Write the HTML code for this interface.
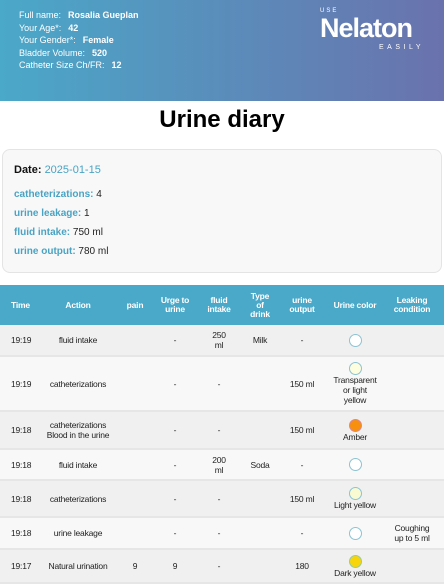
<!DOCTYPE html>
<html><head><meta charset="utf-8"><style>
*{margin:0;padding:0;box-sizing:border-box}
body{width:444px;height:583px;overflow:hidden;background:#fff;font-family:"Liberation Sans",Arial,sans-serif;color:#222}
.hdr{position:absolute;left:0;top:0;width:444px;height:101px;background:linear-gradient(90deg,#4aa8c8,#6a72ad)}
.info{position:absolute;left:19px;top:9px;color:#fff;font-size:9px;line-height:12.6px}
.info b{margin-left:7px}
.logo{position:absolute;left:320px;top:8px;color:#fff}
.logo .use{font-size:6px;letter-spacing:2px;position:absolute;left:0;top:0}
.logo .nel{font-size:27px;font-weight:bold;position:absolute;left:0;top:5px;letter-spacing:-1px}
.logo .eas{font-size:7px;letter-spacing:3.5px;position:absolute;left:59px;top:36px;width:70px}
h1{position:absolute;top:106px;width:444px;text-align:center;font-size:24px;font-weight:bold;color:#000}
.card{position:absolute;left:2px;top:149px;width:440px;height:124px;background:#f8f8f8;border:1px solid #e4e4e4;border-radius:8px;padding:12px 11px;font-size:10px}
.card .d{font-size:11px;font-weight:bold;color:#111;margin-top:2px}
.card .d span{font-weight:normal;color:#4aa3c3}
.card p{margin-top:8px;line-height:11px}
.card p.f{margin-top:13px}
.card p b{color:#4aa3c3}
table{position:absolute;left:0;top:285px;width:444px;border-collapse:collapse;table-layout:fixed;font-size:8.5px;text-align:center;letter-spacing:-0.2px}
th{background:#4aa8c8;color:#fff;font-weight:bold;height:40px;line-height:9px;padding:0 1px}
td{line-height:10px;padding:0 1px;border-bottom:2px solid #e6e6e6}
tr:nth-child(odd) td{background:#f8f8f8}
tr:nth-child(even) td{background:#f0f0f0}
td:first-child,th:first-child{text-align:left;padding-left:11px}
.c{display:inline-block;width:13px;height:13px;border-radius:50%;border:1px solid #8cc3d3;background:#fff;vertical-align:middle}
</style></head><body>
<div class="hdr">
<div class="info">Full name:<b>Rosalia Gueplan</b><br>Your Age*:<b>42</b><br>Your Gender*:<b>Female</b><br>Bladder Volume:<b>520</b><br>Catheter Size Ch/FR:<b>12</b></div>
<div class="logo"><div class="use">USE</div><div class="nel">Nelaton</div><div class="eas">EASILY</div></div>
</div>
<h1>Urine diary</h1>
<div class="card">
<div class="d">Date: <span>2025-01-15</span></div>
<p class="f"><b>catheterizations:</b> 4</p>
<p><b>urine leakage:</b> 1</p>
<p><b>fluid intake:</b> 750 ml</p>
<p><b>urine output:</b> 780 ml</p>
</div>
<table>
<colgroup><col style="width:44px"><col style="width:68px"><col style="width:46px"><col style="width:34px"><col style="width:54px"><col style="width:28px"><col style="width:56px"><col style="width:50px"><col style="width:64px"></colgroup>
<tr><th>Time</th><th>Action</th><th>pain</th><th>Urge to<br>urine</th><th>fluid<br>intake</th><th>Type<br>of<br>drink</th><th>urine<br>output</th><th>Urine color</th><th>Leaking<br>condition</th></tr>
<tr style="height:31px"><td>19:19</td><td>fluid intake</td><td></td><td>-</td><td>250<br>ml</td><td>Milk</td><td>-</td><td><span class="c"></span></td><td></td></tr>
<tr style="height:55px"><td>19:19</td><td>catheterizations</td><td></td><td>-</td><td>-</td><td></td><td>150 ml</td><td><span class="c" style="background:#fdfde0"></span><br>Transparent<br>or light<br>yellow</td><td></td></tr>
<tr style="height:38px"><td>19:18</td><td>catheterizations<br>Blood in the urine</td><td></td><td>-</td><td>-</td><td></td><td>150 ml</td><td><span class="c" style="background:#f7900e;border-color:#d88"></span><br>Amber</td><td></td></tr>
<tr style="height:31px"><td>19:18</td><td>fluid intake</td><td></td><td>-</td><td>200<br>ml</td><td>Soda</td><td>-</td><td><span class="c"></span></td><td></td></tr>
<tr style="height:37px"><td>19:18</td><td>catheterizations</td><td></td><td>-</td><td>-</td><td></td><td>150 ml</td><td><span class="c" style="background:#fafad2"></span><br>Light yellow</td><td></td></tr>
<tr style="height:32px"><td>19:18</td><td>urine leakage</td><td></td><td>-</td><td>-</td><td></td><td>-</td><td><span class="c"></span></td><td>Coughing<br>up to 5 ml</td></tr>
<tr style="height:34px"><td>19:17</td><td>Natural urination</td><td>9</td><td>9</td><td>-</td><td></td><td>180</td><td><span class="c" style="background:#f7d50a;border-color:#9c9"></span><br>Dark yellow</td><td></td></tr>
</table>
</body></html>
